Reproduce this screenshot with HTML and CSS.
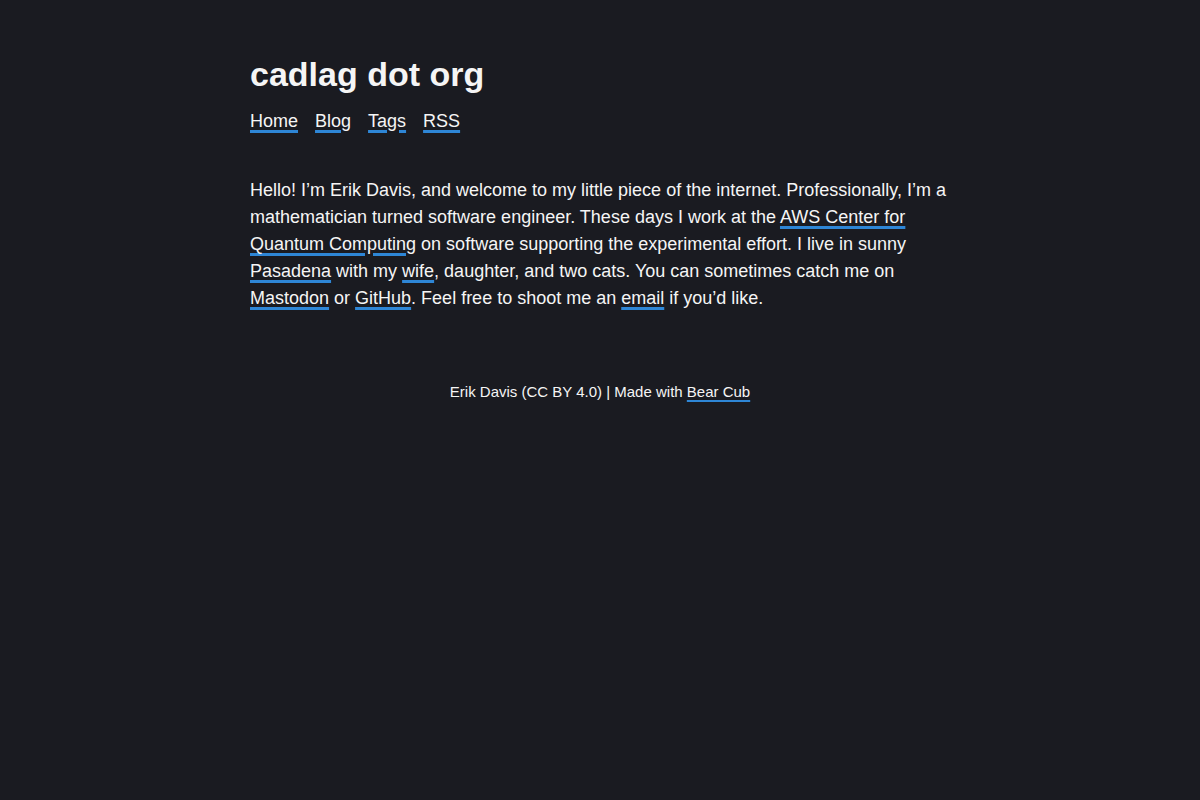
FILE: index.html
```html
<!DOCTYPE html>
<html lang="en">
<head>
<meta charset="utf-8">
<title>cadlag dot org</title>
<link rel="stylesheet" href="styles.css">
</head>
<body>
<div class="page">
  <header class="site-header">
    <h1 class="site-title">cadlag dot org</h1>
    <nav class="site-nav">
      <a href="#">Home</a>
      <a href="#">Blog</a>
      <a href="#">Tags</a>
      <a href="#">RSS</a>
    </nav>
  </header>
  <main class="content">
    <p>Hello! I’m Erik Davis, and welcome to my little piece of the internet. Professionally, I’m a mathematician turned software engineer. These days I work at the <a href="#">AWS Center for Quantum Computing</a> on software supporting the experimental effort. I live in sunny <a href="#">Pasadena</a> with my <a href="#">wife</a>, daughter, and two cats. You can sometimes catch me on <a href="#">Mastodon</a> or <a href="#">GitHub</a>. Feel free to shoot me an <a href="#">email</a> if you’d like.</p>
  </main>
  <footer class="site-footer">
    Erik Davis (CC BY 4.0) | Made with <a href="#">Bear Cub</a>
  </footer>
</div>
</body>
</html>
```
FILE: styles.css
```css
html, body {
  margin: 0;
  padding: 0;
}
body {
  background: #1a1b21;
  color: #f5f5f5;
  font-family: "Liberation Sans", Arial, sans-serif;
  font-size: 18px;
  line-height: 1.5;
}
.page {
  width: 700px;
  margin: 0 auto;
  padding-top: 52px;
}
a {
  color: #f5f5f5;
  text-decoration: underline;
  text-decoration-color: #2e86d6;
  text-decoration-thickness: 3px;
  text-underline-offset: 3px;
}
.site-title {
  margin: 0;
  font-size: 34px;
  font-weight: bold;
  line-height: 44px;
}
.site-nav {
  margin-top: 12px;
  display: flex;
  gap: 17px;
}
.content {
  margin-top: 42px;
}
.content p {
  margin: 0;
}
.site-footer {
  margin-top: 69px;
  text-align: center;
  font-size: 15px;
}
.site-footer a {
  text-decoration-thickness: 2px;
  text-underline-offset: 3px;
}
```
